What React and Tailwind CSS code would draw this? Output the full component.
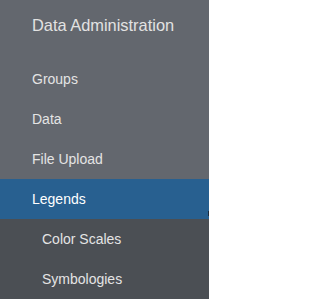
const items = [
  { label: "Groups" },
  { label: "Data" },
  { label: "File Upload" },
  { label: "Legends", active: true },
  { label: "Color Scales", sub: true },
  { label: "Symbologies", sub: true },
];

export default function App() {
  return (
    <div className="w-[209px] h-[299px] overflow-hidden bg-[#63676e] font-['Liberation_Sans',Arial,sans-serif]">
      <div className="h-[59px] pl-[32px] pt-[15px] text-[16.4px] leading-[20px] text-[#e2e2e2]">
        Data Administration
      </div>
      <ul>
        {items.map((item) => (
          <li
            key={item.label}
            className={
              item.active
                ? "relative h-[40px] flex items-center pl-[32px] text-[14px] text-white bg-[#286090]"
                : item.sub
                ? "h-[40px] flex items-center pl-[42px] text-[14px] text-[#e4e4e4] bg-[#4b4f54]"
                : "h-[40px] flex items-center pl-[32px] text-[14px] text-[#e4e4e4]"
            }
          >
            {item.label}
            {item.active && (
              <span className="absolute right-0 top-[32px] w-[1px] h-[5px] bg-[#1c2c3c]" />
            )}
          </li>
        ))}
      </ul>
    </div>
  );
}
